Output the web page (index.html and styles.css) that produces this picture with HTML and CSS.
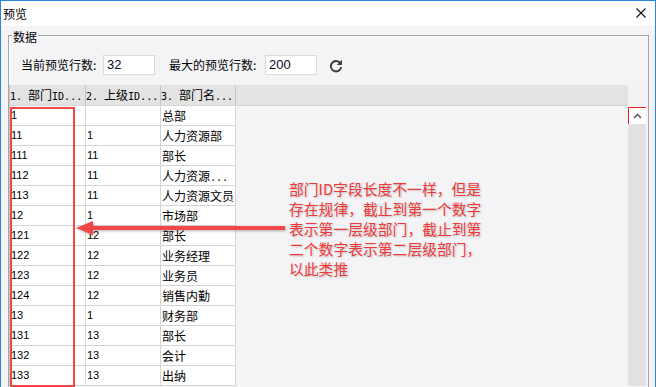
FILE: index.html
```html
<!DOCTYPE html>
<html lang="zh-CN">
<head>
<meta charset="utf-8">
<title>预览</title>
<link rel="stylesheet" href="styles.css">
</head>
<body>
<div class="window">
  <div class="titlebar">
    <span class="title">预览</span>
    <svg class="close" width="10" height="10" viewBox="0 0 10 10"><path d="M0.5 0.5 L9.5 9.5 M9.5 0.5 L0.5 9.5" stroke="#111" stroke-width="1.1" fill="none"/></svg>
  </div>
  <div class="body">
    <div class="group">
      <div class="group-title">数据</div>
      <div class="controls">
        <span class="label label-1">当前预览行数:</span>
        <div class="input">32</div>
        <span class="label label-2">最大的预览行数:</span>
        <div class="input">200</div>
        <svg class="refresh" width="14" height="14" viewBox="0 0 14 14">
          <path d="M11.3 4.2 A5.2 5.2 0 1 0 12.2 8.2" stroke="#3c3c3c" stroke-width="1.9" fill="none"/>
          <path d="M13 0.8 L13 6 L7.8 6 Z" fill="#3c3c3c"/>
        </svg>
      </div>
      <div class="grid">
        <div class="grid-main">
          <div class="grid-head">
            <div class="hcell c1"><span class="hl">1.&nbsp;</span>部门<span class="hl">ID...</span></div>
            <div class="hcell c2"><span class="hl">2.&nbsp;</span>上级<span class="hl">ID...</span></div>
            <div class="hcell c3"><span class="hl">3.&nbsp;</span>部门名<span class="hl">...</span></div>
            <div class="hfill"></div>
          </div>
          <div class="row"><div class="cell c1 num">1</div><div class="cell c2 num"></div><div class="cell c3">总部</div></div>
          <div class="row"><div class="cell c1 num">11</div><div class="cell c2 num">1</div><div class="cell c3">人力资源部</div></div>
          <div class="row"><div class="cell c1 num">111</div><div class="cell c2 num">11</div><div class="cell c3">部长</div></div>
          <div class="row"><div class="cell c1 num">112</div><div class="cell c2 num">11</div><div class="cell c3">人力资源<span class="hl">...</span></div></div>
          <div class="row"><div class="cell c1 num">113</div><div class="cell c2 num">11</div><div class="cell c3">人力资源文员</div></div>
          <div class="row"><div class="cell c1 num">12</div><div class="cell c2 num">1</div><div class="cell c3">市场部</div></div>
          <div class="row"><div class="cell c1 num">121</div><div class="cell c2 num">12</div><div class="cell c3">部长</div></div>
          <div class="row"><div class="cell c1 num">122</div><div class="cell c2 num">12</div><div class="cell c3">业务经理</div></div>
          <div class="row"><div class="cell c1 num">123</div><div class="cell c2 num">12</div><div class="cell c3">业务员</div></div>
          <div class="row"><div class="cell c1 num">124</div><div class="cell c2 num">12</div><div class="cell c3">销售内勤</div></div>
          <div class="row"><div class="cell c1 num">13</div><div class="cell c2 num">1</div><div class="cell c3">财务部</div></div>
          <div class="row"><div class="cell c1 num">131</div><div class="cell c2 num">13</div><div class="cell c3">部长</div></div>
          <div class="row"><div class="cell c1 num">132</div><div class="cell c2 num">13</div><div class="cell c3">会计</div></div>
          <div class="row"><div class="cell c1 num">133</div><div class="cell c2 num">13</div><div class="cell c3">出纳</div></div>
        </div>
        <div class="vscroll">
          <div class="corner"></div>
          <div class="up-btn">
            <svg width="9" height="6" viewBox="0 0 9 6"><path d="M1 5 L4.5 1.5 L8 5" stroke="#606060" stroke-width="1.6" fill="none"/></svg>
          </div>
          <div class="track"></div>
        </div>
      </div>
    </div>
  </div>
  <div class="mark-box"></div>
  <svg class="arrow" width="656" height="387" viewBox="0 0 656 387">
    <path d="M88 228 L285 228" stroke="#f04848" stroke-width="4" fill="none"/>
    <path d="M76 228 L93 221 L93 235 Z" fill="#f04848"/>
  </svg>
  <div class="note">部门ID字段长度不一样，但是<br>存在规律，截止到第一个数字<br>表示第一层级部门，截止到第<br>二个数字表示第二层级部门，<br>以此类推</div>
</div>
</body>
</html>
```

FILE: styles.css
```css
* { box-sizing: border-box; }

html, body {
  margin: 0;
  padding: 0;
  background: #f4f4f7;
}

body {
  font-family: "Noto Sans CJK SC", "Liberation Sans", sans-serif;
  font-size: 12px;
  color: #000;
}

.window {
  position: relative;
  width: 656px;
  height: 387px;
  overflow: hidden;
  border: 1px solid #2a86d8;
  border-bottom: none;
  background: #f4f4f7;
}

.titlebar {
  height: 25px;
  background: #fff;
  display: flex;
  align-items: center;
  justify-content: space-between;
  padding: 0 9px 0 2px;
}

.title {
  font-size: 12px;
  line-height: 25px;
}

.close { display: block; margin-top: -1px; }

.body {
  padding: 9px 6px 0 7px;
  background: #f4f4f7;
}

.group {
  height: 400px;
  border: 1px solid #a6a6a6;
  box-shadow: inset 1px 1px 0 #fff;
}

.group-title {
  width: fit-content;
  margin: -6px 0 0 3px;
  padding: 0 1px;
  background: #f4f4f7;
  font-size: 12px;
  line-height: 14px;
}

.controls {
  display: flex;
  align-items: center;
  height: 20px;
  margin-top: 11px;
  padding-left: 12px;
}

.label {
  font-size: 12px;
  line-height: 20px;
  white-space: nowrap;
}

.label-1 { width: 82px; }
.label-2 { width: 96px; margin-left: 14px; }

.input {
  width: 52px;
  height: 20px;
  background: #fff;
  border: 1px solid #d9d9d9;
  font-family: "Liberation Sans", sans-serif;
  font-size: 13px;
  line-height: 18px;
  padding-left: 3px;
  color: #0a0a1e;
}

.refresh { display: block; margin-left: 12px; margin-top: 1px; }

.grid {
  display: flex;
  margin-top: 10px;
  margin-right: 2px;
}

.grid-main {
  width: 619px;
  border-left: 1px solid #c8c8c8;
}

.grid-head {
  display: flex;
  height: 21px;
  background: #e3e3e3;
  border-bottom: 1px solid #d6d6d6;
}

.hcell {
  height: 20px;
  line-height: 20px;
  padding-left: 0;
  border-right: 1px solid #c4c4c4;
  white-space: nowrap;
  overflow: hidden;
  font-size: 12px;
}

.hl {
  font-family: "DejaVu Sans Mono", "Liberation Mono", monospace;
  font-size: 10px;
}

.hfill { flex: 1; }

.c1 { width: 76px; }
.c2 { width: 75px; }
.c3 { width: 75px; }

.row {
  display: flex;
  height: 20px;
}

.cell {
  height: 20px;
  line-height: 19px;
  background: #fff;
  border-right: 1px solid #d5d5d5;
  border-bottom: 1px solid #d5d5d5;
  padding-left: 1px;
  white-space: nowrap;
  overflow: hidden;
  font-size: 12px;
}

.num {
  font-family: "Liberation Sans", sans-serif;
  font-size: 11px;
  padding-left: 1px;
}

.vscroll {
  width: 18px;
  display: flex;
  flex-direction: column;
}

.corner {
  height: 22px;
  background: #f3f3f5;
}

.up-btn {
  height: 17px;
  background: #fff;
  border-left: 1px solid #e81c1c;
  border-top: 1px solid #e81c1c;
  display: flex;
  align-items: center;
  justify-content: center;
}

.up-btn svg { display: block; }

.track {
  flex: 1;
  background: #e1e1e1;
  border-left: 1px solid #e6e6d6;
  border-right: 1px solid #e6e6d6;
}

.mark-box {
  position: absolute;
  left: 9px;
  top: 106px;
  width: 65px;
  height: 280px;
  border: 2px solid #ef4646;
}

.arrow {
  position: absolute;
  left: -1px;
  top: -1px;
  filter: drop-shadow(1px 1px 1.5px rgba(0, 0, 0, 0.3));
  pointer-events: none;
}

.note {
  position: absolute;
  left: 288px;
  top: 178px;
  font-size: 14.8px;
  line-height: 20px;
  color: #f03a3a;
  white-space: nowrap;
  text-shadow: 1px 1px 2px rgba(0, 0, 0, 0.22);
}
```
